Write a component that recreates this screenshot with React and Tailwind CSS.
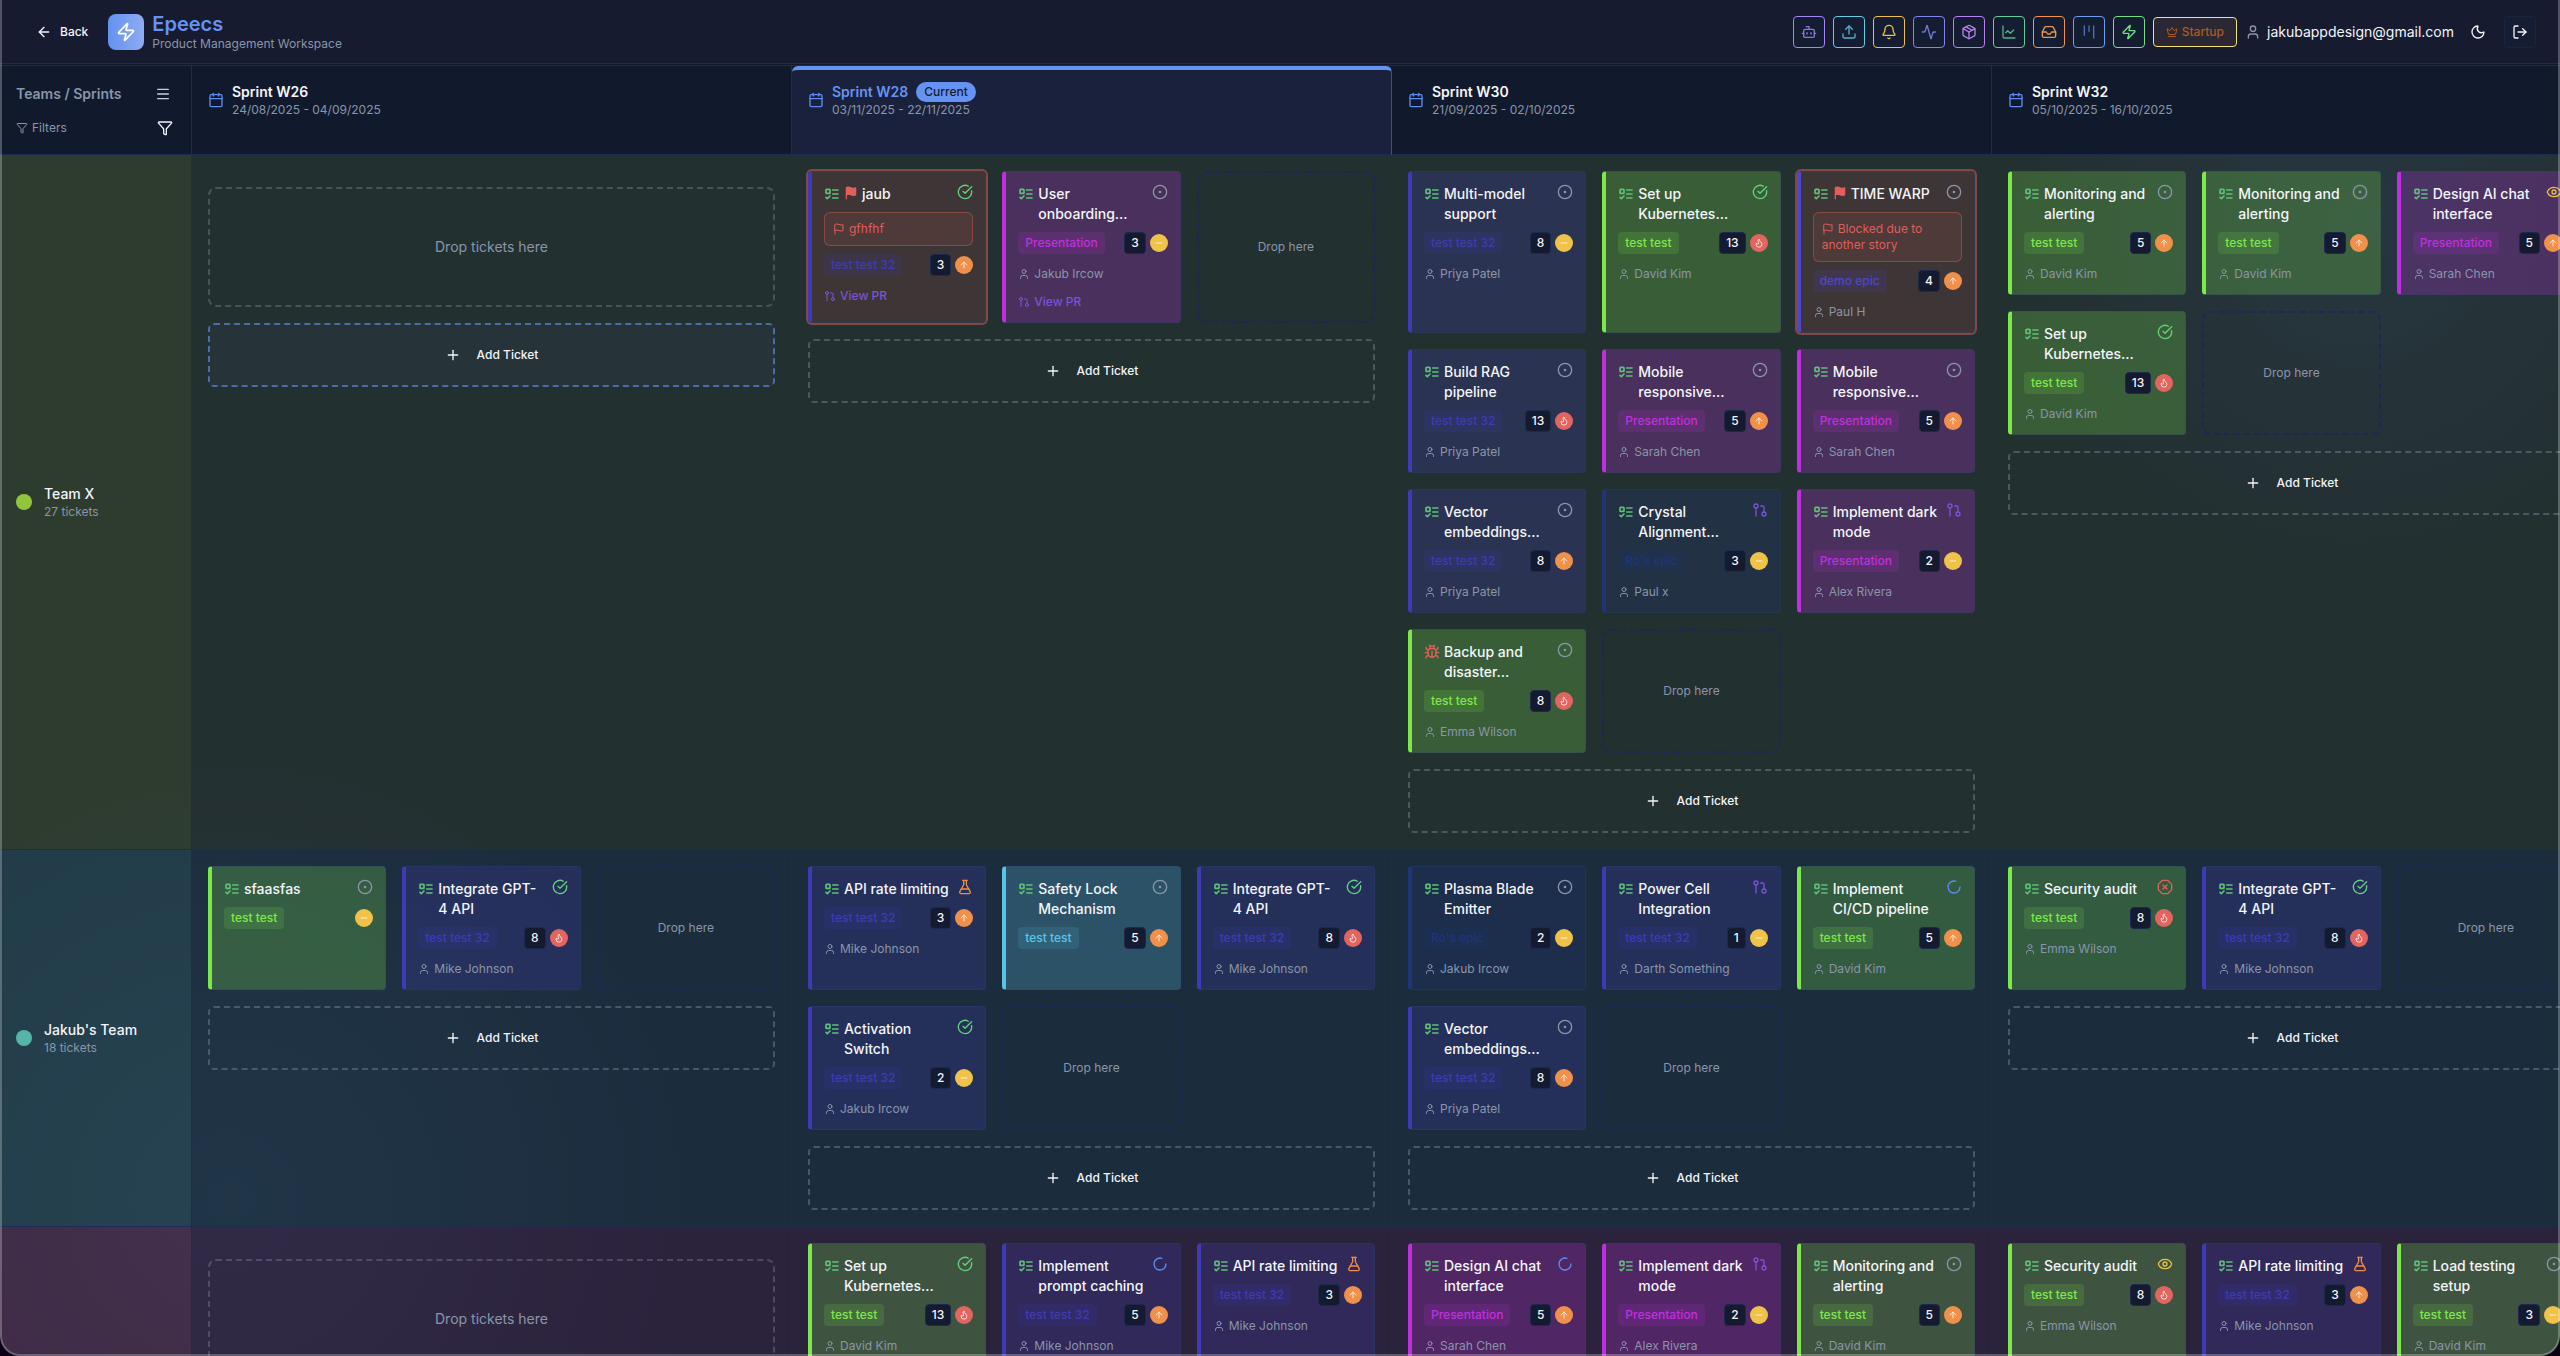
import React from 'react';
import {
  Activity, ArrowLeft, ArrowUp, Bell, Bot, Bug, Calendar, ChartLine, CircleCheckBig, CircleDot, Crown, Eye,
  Flame, FlaskConical, Funnel, GitPullRequest, Inbox, Kanban, LoaderCircle, LogOut, Menu,
  Minus, Moon, OctagonX, Package, Plus, Upload, User, Zap
} from 'lucide-react';

const EPICS = {
  indigo: { card: 'border-l-[#3f3bb5] bg-[#3f3bb5]/25', badge: 'text-[#3f3bb5] bg-[#3f3bb5]/15', label: 'test test 32' },
  green: { card: 'border-l-[#7de84a] bg-[#7de84a]/25', badge: 'text-[#7de84a] bg-[#7de84a]/15', label: 'test test' },
  purple: { card: 'border-l-[#c02fdf] bg-[#c02fdf]/25', badge: 'text-[#c02fdf] bg-[#c02fdf]/15', label: 'Presentation' },
  sky: { card: 'border-l-[#5bc4e6] bg-[#5bc4e6]/25', badge: 'text-[#5bc4e6] bg-[#5bc4e6]/15', label: 'test test' },
  navy: { card: 'border-l-[#1e357a] bg-[#1e357a]/25', badge: 'text-[#1e357a] bg-[#1e357a]/15', label: "Ro's epic" },
  demo: { card: 'border-l-[#4f46d0] bg-[#4f46d0]/25', badge: 'text-[#4f46d0] bg-[#4f46d0]/15', label: 'demo epic' }
};

const STATUS = {
  todo: { Icon: CircleDot, color: 'text-[#8a95aa]' },
  done: { Icon: CircleCheckBig, color: 'text-[#62d27c]' },
  pr: { Icon: GitPullRequest, color: 'text-[#7c52d6]' },
  progress: { Icon: LoaderCircle, color: 'text-[#5c8cf0]' },
  testing: { Icon: FlaskConical, color: 'text-[#f08c45]' },
  review: { Icon: Eye, color: 'text-[#ecc043]' },
  blocked: { Icon: OctagonX, color: 'text-[#e2605c]' }
};

const PRIORITY = {
  medium: { Icon: Minus, color: 'bg-[#efc34a]' },
  high: { Icon: ArrowUp, color: 'bg-[#f0914b]' },
  critical: { Icon: Flame, color: 'bg-[#e2655f]' }
};

const t = (title, epic, status, points, priority, user, extra = {}) => ({ title, epic, status, points, priority, user, ...extra });

const SPRINTS = [
  { name: 'Sprint W26', dates: '24/08/2025 - 04/09/2025' },
  { name: 'Sprint W28', dates: '03/11/2025 - 22/11/2025', current: true },
  { name: 'Sprint W30', dates: '21/09/2025 - 02/10/2025' },
  { name: 'Sprint W32', dates: '05/10/2025 - 16/10/2025' }
];

const TEAMS = [
  {
    name: 'Team X', count: '27 tickets', dot: 'bg-[#93c53c]', side: 'bg-[#90ac3a]/23', cell: 'bg-[#90ac41]/15',
    cells: [
      [],
      [
        t('jaub', 'indigo', 'done', 3, 'high', null, { blocked: 'gfhfhf', pr: true }),
        t('User onboarding...', 'purple', 'todo', 3, 'medium', 'Jakub Ircow', { pr: true })
      ],
      [
        t('Multi-model support', 'indigo', 'todo', 8, 'medium', 'Priya Patel'),
        t('Set up Kubernetes...', 'green', 'done', 13, 'critical', 'David Kim'),
        t('TIME WARP', 'demo', 'todo', 4, 'high', 'Paul H', { blocked: 'Blocked due to another story' }),
        t('Build RAG pipeline', 'indigo', 'todo', 13, 'critical', 'Priya Patel'),
        t('Mobile responsive...', 'purple', 'todo', 5, 'high', 'Sarah Chen'),
        t('Mobile responsive...', 'purple', 'todo', 5, 'high', 'Sarah Chen'),
        t('Vector embeddings...', 'indigo', 'todo', 8, 'high', 'Priya Patel'),
        t('Crystal Alignment...', 'navy', 'pr', 3, 'medium', 'Paul x'),
        t('Implement dark mode', 'purple', 'pr', 2, 'medium', 'Alex Rivera'),
        t('Backup and disaster...', 'green', 'todo', 8, 'critical', 'Emma Wilson', { bug: true })
      ],
      [
        t('Monitoring and alerting', 'green', 'todo', 5, 'high', 'David Kim'),
        t('Monitoring and alerting', 'green', 'todo', 5, 'high', 'David Kim'),
        t('Design AI chat interface', 'purple', 'review', 5, 'high', 'Sarah Chen'),
        t('Set up Kubernetes...', 'green', 'done', 13, 'critical', 'David Kim')
      ]
    ]
  },
  {
    name: "Jakub's Team", count: '18 tickets', dot: 'bg-[#56b5a6]', side: 'bg-[#529e98]/25', cell: 'bg-[#5a999a]/15',
    cells: [
      [
        t('sfaasfas', 'green', 'todo', null, 'medium', null),
        t('Integrate GPT-4 API', 'indigo', 'done', 8, 'critical', 'Mike Johnson')
      ],
      [
        t('API rate limiting', 'indigo', 'testing', 3, 'high', 'Mike Johnson'),
        t('Safety Lock Mechanism', 'sky', 'todo', 5, 'high', null),
        t('Integrate GPT-4 API', 'indigo', 'done', 8, 'critical', 'Mike Johnson'),
        t('Activation Switch', 'indigo', 'done', 2, 'medium', 'Jakub Ircow')
      ],
      [
        t('Plasma Blade Emitter', 'navy', 'todo', 2, 'medium', 'Jakub Ircow'),
        t('Power Cell Integration', 'indigo', 'pr', 1, 'medium', 'Darth Something'),
        t('Implement CI/CD pipeline', 'green', 'progress', 5, 'high', 'David Kim'),
        t('Vector embeddings...', 'indigo', 'todo', 8, 'high', 'Priya Patel')
      ],
      [
        t('Security audit', 'green', 'blocked', 8, 'critical', 'Emma Wilson'),
        t('Integrate GPT-4 API', 'indigo', 'done', 8, 'critical', 'Mike Johnson')
      ]
    ]
  },
  {
    side: 'bg-[#c55786]/25', cell: 'bg-[#c55791]/15',
    cells: [
      [],
      [
        t('Set up Kubernetes...', 'green', 'done', 13, 'critical', 'David Kim'),
        t('Implement prompt caching', 'indigo', 'progress', 5, 'high', 'Mike Johnson'),
        t('API rate limiting', 'indigo', 'testing', 3, 'high', 'Mike Johnson')
      ],
      [
        t('Design AI chat interface', 'purple', 'progress', 5, 'high', 'Sarah Chen'),
        t('Implement dark mode', 'purple', 'pr', 2, 'medium', 'Alex Rivera'),
        t('Monitoring and alerting', 'green', 'todo', 5, 'high', 'David Kim')
      ],
      [
        t('Security audit', 'green', 'review', 8, 'critical', 'Emma Wilson'),
        t('API rate limiting', 'indigo', 'testing', 3, 'high', 'Mike Johnson'),
        t('Load testing setup', 'green', 'todo', 3, 'medium', 'David Kim')
      ]
    ]
  }
];

const TOOLS = [
  { label: 'Assistant', Icon: Bot, color: 'border-[#a585f5] text-[#8f78d8]' },
  { label: 'Upload', Icon: Upload, color: 'border-[#5fd0ea] text-[#4fb4cc]' },
  { label: 'Notifications', Icon: Bell, color: 'border-[#f0c23c] text-[#f0c23c]' },
  { label: 'Activity', Icon: Activity, color: 'border-[#7f86ee] text-[#6f78d8]' },
  { label: 'Releases', Icon: Package, color: 'border-[#b981f2] text-[#b981f2]' },
  { label: 'Reports', Icon: ChartLine, color: 'border-[#5dcf98] text-[#4fb384]' },
  { label: 'Inbox', Icon: Inbox, color: 'border-[#f09448] text-[#f09448]' },
  { label: 'Board', Icon: Kanban, color: 'border-[#6a9ff2] text-[#4d70b4]' },
  { label: 'Automations', Icon: Zap, color: 'border-[#74e086] text-[#74e086]' }
];

function FlagIcon({ className }) {
  return (
    <svg viewBox="0 0 24 24" fill="none" stroke="currentColor" strokeWidth="2" strokeLinecap="round" strokeLinejoin="round" className={className}>
      <path d="M4 15s1-1 4-1 5 2 8 2 4-1 4-1V3s-1 1-4 1-5-2-8-2-4 1-4 1z" />
      <path d="M4 22v-7" />
    </svg>
  );
}

function TaskIcon({ className }) {
  return (
    <svg viewBox="0 0 24 24" fill="none" stroke="currentColor" strokeWidth="2.5" strokeLinecap="round" strokeLinejoin="round" className={className}>
      <rect x="3" y="5" width="6" height="6" rx="1" />
      <path d="m3 17 2 2 4-4M13 6h8M13 12h8M13 18h8" />
    </svg>
  );
}

function TicketCard({ ticket }) {
  const epic = EPICS[ticket.epic];
  const status = STATUS[ticket.status];
  const priority = PRIORITY[ticket.priority];

  return (
    <article className={`rounded-sm border border-l-4 border-[#2b4470]/35 p-3 ${epic.card} ${ticket.blocked ? 'bg-[#e0605c]/15 ring-2 ring-[#e0605c]/50' : ''}`}>
      <div className="flex items-start justify-between gap-2">
        <div className="flex min-w-0 gap-1">
          {ticket.bug
            ? <Bug className="mt-0.5 size-4 shrink-0 text-[#e2605c]" />
            : <TaskIcon className="mt-0.5 size-4 shrink-0 text-[#5fc078]" />}
          {ticket.blocked && <FlagIcon className="mt-0.5 size-3.5 shrink-0 fill-current text-[#e2605c]" />}
          <h3 className="text-sm font-medium text-[#f3f5fa]">{ticket.title}</h3>
        </div>
        <status.Icon className={`size-4 shrink-0 ${status.color}`} />
      </div>

      {ticket.blocked && (
        <p className="mt-2 rounded-md border border-[#e0605c]/40 bg-[#e0605c]/10 p-2 text-xs text-[#dd5f5b]">
          <FlagIcon className="mr-1 inline size-3 align-[-2px]" />{ticket.blocked}
        </p>
      )}

      <div className="mt-2 flex items-center justify-between">
        <span className={`rounded border border-transparent px-1.5 py-0.5 text-xs font-medium ${epic.badge}`}>{epic.label}</span>
        <div className="flex items-center gap-1">
          {ticket.points && (
            <span className="rounded border border-[#1c294c] bg-[#141b30] px-1.5 py-0.5 text-xs font-medium text-[#f3f5fa]">{ticket.points}</span>
          )}
          <span className={`rounded-full p-1 text-white/90 ${priority.color}`}>
            <priority.Icon className="size-2.5" />
          </span>
        </div>
      </div>

      {ticket.user && (
        <div className="mt-3 flex items-center gap-1 text-xs text-[#8a95aa]">
          <User className="size-3" />
          {ticket.user}
        </div>
      )}
      {ticket.pr && (
        <a href="#pr" className="mt-3 flex items-center gap-1 text-xs font-medium text-[#7c52d6]">
          <GitPullRequest className="size-3" />
          View PR
        </a>
      )}
    </article>
  );
}

function AddTicket({ active }) {
  return (
    <button className={`flex h-16 w-full items-center justify-center gap-4 rounded-md border-2 border-dashed text-xs font-medium text-[#f3f5fa] ${active ? 'border-[#6493f2]/60 bg-[#6493f2]/5' : 'border-[#8a95aa]/40'}`}>
      <Plus className="size-4" />
      Add Ticket
    </button>
  );
}

function Cell({ tickets, active, tint }) {
  return (
    <section className={`flex w-[600px] shrink-0 flex-col gap-4 border-r border-b border-[#1f2a58]/60 p-4 ${tint}`}>
      {tickets.length === 0 ? (
        <div className="mt-4 flex h-30 items-center justify-center rounded-lg border-2 border-dashed border-[#8a95aa]/35 text-sm text-[#8a95aa]">
          Drop tickets here
        </div>
      ) : (
        <div className="grid grid-cols-3 gap-4">
          {tickets.map((ticket, i) => <TicketCard key={i} ticket={ticket} />)}
          {tickets.length % 3 !== 0 && (
            <div className="flex items-center justify-center rounded-lg border-2 border-dashed border-[#1e2560]/80 text-xs text-[#8a95aa]">
              Drop here
            </div>
          )}
        </div>
      )}
      <AddTicket active={active} />
    </section>
  );
}

function TopBar() {
  return (
    <header className="flex h-16 shrink-0 items-center justify-between border-b border-[#1e2a52] bg-[#161b30] px-6">
      <div className="flex items-center">
        <button className="flex h-8 items-center gap-2 px-3 text-xs font-medium text-[#f3f5fa]">
          <ArrowLeft className="size-4" />
          Back
        </button>
        <div className="ml-2 flex size-9 items-center justify-center rounded-lg bg-gradient-to-r from-[#6391f0] to-[#8fabf3] text-white">
          <Zap className="size-5" />
        </div>
        <div className="ml-2">
          <h1 className="text-xl leading-6 font-semibold text-[#6693f2]">Epeecs</h1>
          <p className="text-xs text-[#8a95aa]">Product Management Workspace</p>
        </div>
      </div>

      <div className="flex items-center gap-2">
        {TOOLS.map(({ label, Icon, color }) => (
          <button key={label} aria-label={label} className={`flex size-8 items-center justify-center rounded border bg-[#141d31] ${color}`}>
            <Icon className="size-4" />
          </button>
        ))}
        <button className="flex h-[30px] items-center gap-1 rounded border border-[#f6e27d] bg-[#2b2833] px-3 text-xs font-medium text-[#ac5a26]">
          <Crown className="size-3" />
          Startup
        </button>
        <div className="flex items-center gap-1.5">
          <User className="size-4 text-[#8a95aa]" />
          <span className="text-sm text-[#f3f5fa]">jakubappdesign@gmail.com</span>
        </div>
        <div className="flex items-center gap-2.5">
          <button aria-label="Toggle theme" className="flex size-8 items-center justify-center text-[#f3f5fa]">
            <Moon className="size-4" />
          </button>
          <button aria-label="Log out" className="flex size-8 items-center justify-center rounded border border-[#1a2440] bg-[#141d31] text-[#f3f5fa]">
            <LogOut className="size-4" />
          </button>
        </div>
      </div>
    </header>
  );
}

function SprintHeader({ sprint }) {
  return (
    <div className={`flex h-[89px] w-[600px] shrink-0 items-start border-r border-b px-4 ${sprint.current ? 'rounded-t-md border-t-4 border-r-[#35509a] border-b-[#1e2a58] border-t-[#6693f2] bg-[#19213c] pt-3' : 'border-[#1e2a52] bg-[#111a2d] pt-4'}`}>
      <div className="flex items-center gap-2">
        <Calendar className="size-4 text-[#5f8cee]" />
        <div>
          <div className="flex items-center gap-2">
            <h2 className={`text-sm font-semibold ${sprint.current ? 'text-[#6693f2]' : 'text-[#f3f5fa]'}`}>{sprint.name}</h2>
            {sprint.current && <span className="rounded-full bg-[#6693f2] px-2 py-0.5 text-xs font-medium text-[#131b33]">Current</span>}
          </div>
          <p className="text-xs text-[#8a95aa]">{sprint.dates}</p>
        </div>
      </div>
    </div>
  );
}

export default function App() {
  return (
    <div className="h-screen bg-[#0a0316] font-['Inter',sans-serif]">
      <div className="relative flex h-full flex-col overflow-hidden rounded-b-[20px] bg-[#111a2d]">
        <TopBar />

        <main className="mt-px flex-1 overflow-hidden border-t border-[#1e2a52] bg-[radial-gradient(circle_at_92%_12%,#152140,transparent_14%),radial-gradient(circle_at_9%_88%,#18243a,transparent_18%)]">
          <div className="flex">
            <div className="h-[89px] w-48 shrink-0 border-r border-b border-[#1e2a52] bg-[#111a2d] px-4 pt-4 text-[#8a95aa]">
              <div className="flex h-6 items-center justify-between">
                <span className="text-sm font-semibold">Teams / Sprints</span>
                <button aria-label="Menu" className="p-1 text-[#c9cfda]"><Menu className="size-4" /></button>
              </div>
              <div className="mt-2 flex h-7 items-center justify-between">
                <span className="flex items-center gap-1 text-xs"><Funnel className="size-3" />Filters</span>
                <button aria-label="Filters" className="p-0.5 text-[#f3f5fa]"><Funnel className="size-4" /></button>
              </div>
            </div>
            {SPRINTS.map((sprint) => <SprintHeader key={sprint.name} sprint={sprint} />)}
          </div>

          {TEAMS.map((team, row) => (
            <div key={row} className="flex">
              <div className={`flex w-48 shrink-0 items-center gap-3 border-r border-b border-[#1e2a58] px-4 ${team.side}`}>
                {team.name && (
                  <>
                    <span className={`size-4 rounded-full ${team.dot}`} />
                    <div>
                      <h2 className="text-sm font-medium text-[#f3f5fa]">{team.name}</h2>
                      <p className="text-xs text-[#8a95aa]">{team.count}</p>
                    </div>
                  </>
                )}
              </div>
              {team.cells.map((tickets, col) => (
                <Cell key={col} tickets={tickets} active={row === 0 && col === 0} tint={team.cell} />
              ))}
            </div>
          ))}
        </main>

        {/* window edge */}
        <div className="pointer-events-none absolute inset-0 rounded-b-[20px] border-x-2 border-b-2 border-white/25" />
      </div>
    </div>
  );
}
